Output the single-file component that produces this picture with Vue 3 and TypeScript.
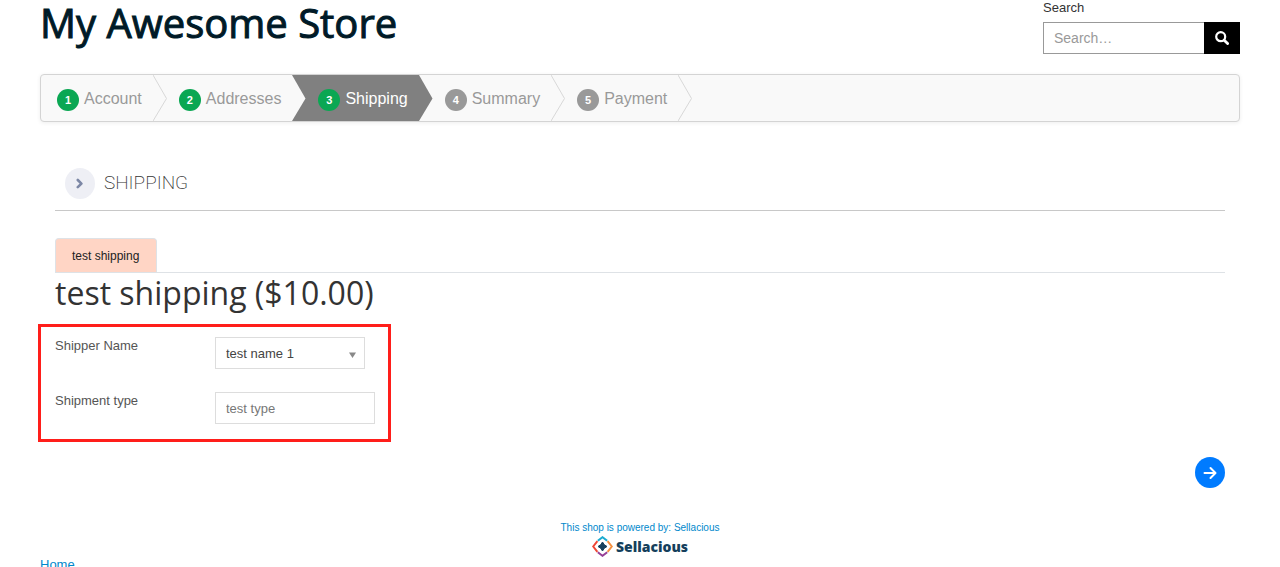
<script setup lang="ts">
import { ref } from 'vue'

interface Step {
  label: string
  state: 'done' | 'active' | 'todo'
}

const steps: Step[] = [
  { label: 'Account', state: 'done' },
  { label: 'Addresses', state: 'done' },
  { label: 'Shipping', state: 'active' },
  { label: 'Summary', state: 'todo' },
  { label: 'Payment', state: 'todo' },
]

const query = ref('')
const shipper = ref('test name 1')
const shipmentType = ref('')

function arrowClass(index: number): string {
  if (steps[index].state === 'active') return 'arrow leaving'
  if (steps[index + 1]?.state === 'active') return 'arrow entering'
  return 'arrow'
}
</script>

<template>
  <div class="page">
    <header class="header">
      <h1 class="brand">My Awesome Store</h1>
      <form class="search" role="search" @submit.prevent>
        <label for="search-box">Search</label>
        <div class="search-row">
          <input id="search-box" v-model="query" type="text" placeholder="Search…" />
          <button type="submit" aria-label="Submit search">
            <svg width="14" height="14" viewBox="0 0 14 14">
              <circle cx="5.7" cy="5.7" r="4.5" fill="none" stroke="#fff" stroke-width="2.2" />
              <path d="M9.2 9.2l3.4 3.4" stroke="#fff" stroke-width="2.8" stroke-linecap="round" />
            </svg>
          </button>
        </div>
      </form>
    </header>

    <ol class="steps">
      <li v-for="(step, i) in steps" :key="step.label" :class="['step', step.state]">
        <span class="step-body">
          <span class="badge">{{ i + 1 }}</span>
          <span class="step-label">{{ step.label }}</span>
        </span>
        <svg :class="arrowClass(i)" width="14" height="46" viewBox="0 0 14 46" preserveAspectRatio="none">
          <path class="arrow-fill" d="M0 0L13.5 23.5L0 46Z" />
          <path class="arrow-line" d="M0 0L13.5 23.5L0 46" />
        </svg>
      </li>
    </ol>

    <main class="content">
      <div class="section-head">
        <span class="section-icon">
          <svg width="8" height="12" viewBox="0 0 8 12">
            <path d="M1.8 2l3.6 3.6l-3.6 3.6" fill="none" stroke="#7c87a5" stroke-width="2.6" stroke-linecap="round" stroke-linejoin="round" />
          </svg>
        </span>
        <h2>SHIPPING</h2>
      </div>

      <div class="tabs" role="tablist">
        <button class="tab" type="button" role="tab" aria-selected="true">test shipping</button>
      </div>

      <h3 class="method">test shipping ($10.00)</h3>

      <form class="fields" @submit.prevent>
        <div class="field">
          <label for="shipper">Shipper Name</label>
          <div class="select-wrap">
            <select id="shipper" v-model="shipper">
              <option>test name 1</option>
            </select>
            <svg class="caret" width="7" height="6" viewBox="0 0 7 6">
              <path d="M0 0.5H7L3.5 6Z" fill="#888" />
            </svg>
          </div>
        </div>
        <div class="field">
          <label for="shipment-type">Shipment type</label>
          <input id="shipment-type" v-model="shipmentType" type="text" placeholder="test type" />
        </div>
      </form>

      <div class="actions">
        <button class="next" type="button" aria-label="Next">
          <svg width="14" height="14" viewBox="0 0 14 14">
            <path d="M1.5 7H12M7.5 2l5 5l-5 5" fill="none" stroke="#fff" stroke-width="2" stroke-linecap="round" stroke-linejoin="round" />
          </svg>
        </button>
      </div>
    </main>

    <footer class="footer">
      <a class="powered" href="#">This shop is powered by: Sellacious</a>
      <a class="logo" href="#">
        <svg width="21" height="21" viewBox="0 0 21 21" fill="none" stroke-width="2">
          <path d="M5.8 4.7L10.5 1.2L15.2 4.7" stroke="#1cabd0" />
          <path d="M5.4 5.2L1.2 10.5L5.4 15.8" stroke="#ee4636" />
          <path d="M15.6 5.2L19.8 10.5L15.6 15.8" stroke="#f5903f" />
          <path d="M5.8 16.3L10.5 19.8L15.2 16.3" stroke="#963f96" />
          <path d="M10.5 6L12.3 8.7L15 10.5L12.3 12.3L10.5 15L8.7 12.3L6 10.5L8.7 8.7Z" fill="#153f5c" stroke="#153f5c" stroke-width="1" />
        </svg>
        <span>Sellacious</span>
      </a>
      <nav class="crumbs"><a href="#">Home</a></nav>
    </footer>
  </div>
</template>

<style>
html {
  overflow-x: hidden;
}
body {
  margin: 0;
  background: #fff;
}
</style>

<style scoped>
.page {
  max-width: 1200px;
  margin: 0 auto;
  padding: 0 40px;
  font-family: "Liberation Sans", Arial, sans-serif;
  font-size: 13px;
  line-height: 16px;
  color: #333;
}
button,
input,
select {
  font-family: inherit;
  box-sizing: border-box;
  margin: 0;
  border-radius: 0;
}
input::placeholder {
  color: #999;
  opacity: 1;
}
a {
  color: #0088cc;
  text-decoration: none;
}
.header {
  display: flex;
  justify-content: space-between;
  align-items: flex-start;
}
.brand {
  margin: 0;
  font: 400 40px/46px "Open Sans", sans-serif;
  color: #001a27;
  -webkit-text-stroke: 1px #001a27;
}
.search {
  width: 197px;
}
.search label {
  display: block;
  padding-bottom: 6px;
}
.search-row {
  display: flex;
  height: 32px;
}
.search-row input {
  flex: 1;
  min-width: 0;
  padding: 0 10px;
  border: 1px solid #999;
  border-right: 0;
  font-size: 14px;
}
.search-row button {
  width: 36px;
  padding: 0;
  border: 0;
  background: #000;
}
.search-row svg {
  display: block;
  margin: 0 auto;
}
.steps {
  display: flex;
  margin: 20px 0 0;
  padding: 0;
  list-style: none;
  background: #f9f9f9;
  border: 1px solid #d4d4d4;
  border-radius: 4px;
  box-shadow: 0 1px 4px rgba(0, 0, 0, 0.07);
}
.step {
  display: flex;
  color: #999;
}
.step-body {
  display: flex;
  align-items: center;
  gap: 5px;
  padding: 3px 11px 0 12px;
}
.step:first-child .step-body {
  padding-left: 16px;
}
.badge {
  width: 22px;
  height: 22px;
  border-radius: 50%;
  background: #999;
  color: #fff;
  font-size: 11px;
  font-weight: 700;
  line-height: 22px;
  text-align: center;
}
.step-label {
  font-size: 16px;
  line-height: 20px;
  padding-bottom: 2px;
}
.done .badge,
.active .badge {
  background: #0aa753;
}
.active .step-body {
  background: #808080;
  color: #fff;
}
.arrow {
  display: block;
}
.arrow-fill {
  fill: #f9f9f9;
}
.arrow-line {
  fill: none;
  stroke: #d8d8d8;
}
.entering {
  background: #808080;
}
.entering .arrow-line,
.leaving .arrow-line {
  stroke: none;
}
.leaving .arrow-fill {
  fill: #808080;
}
.content {
  padding: 46px 15px 0;
}
.section-head {
  display: flex;
  align-items: center;
  gap: 9px;
  padding: 0 10px 11px;
  border-bottom: 1px solid #c8c8c8;
}
.section-icon {
  display: flex;
  align-items: center;
  justify-content: center;
  width: 30px;
  height: 31px;
  border-radius: 50%;
  background: #eeeff5;
}
.section-head h2 {
  margin: 0;
  padding-bottom: 2px;
  font: 200 19px/24px Roboto, sans-serif;
  color: #333;
}
.tabs {
  display: flex;
  margin-top: 27px;
  border-bottom: 1px solid #dee2e6;
}
.tab {
  height: 34px;
  padding: 0 17px 0 16px;
  border: 1px solid #dee2e6;
  border-bottom: 0;
  border-radius: 4px 4px 0 0;
  background: #ffd5c5;
  font-size: 12px;
  color: #222;
}
.method {
  margin: 0;
  font: 400 32px/40px "Open Sans", sans-serif;
  color: #333;
}
.fields {
  display: flex;
  flex-direction: column;
  gap: 23px;
  box-sizing: border-box;
  width: 353px;
  margin: 11px 0 0 -17px;
  padding: 10px 13px 15px 14px;
  border: 3px solid #ff1e1a;
}
.field {
  display: flex;
  align-items: flex-start;
}
.field label {
  width: 160px;
  padding-top: 1px;
  color: #555;
}
.field input {
  width: 160px;
  height: 32px;
  padding: 0 10px;
  border: 1px solid #ddd;
  font-size: 13px;
}
.field input::placeholder {
  color: #777;
}
.select-wrap {
  position: relative;
}
.field select {
  width: 150px;
  height: 32px;
  padding: 0 10px;
  border: 1px solid #ddd;
  background: #fff;
  font-size: 13px;
  color: #444;
  appearance: none;
}
.caret {
  position: absolute;
  right: 9px;
  top: 15px;
  pointer-events: none;
}
.actions {
  display: flex;
  justify-content: flex-end;
  margin-top: 15px;
}
.next {
  display: flex;
  align-items: center;
  justify-content: center;
  width: 30px;
  height: 31px;
  padding: 0;
  border: 0;
  border-radius: 50%;
  background: #007bff;
}
.footer {
  display: flex;
  flex-direction: column;
  align-items: center;
  margin-top: 34px;
}
.powered {
  font-size: 10px;
  line-height: 12px;
}
.logo {
  display: flex;
  align-items: center;
  gap: 3px;
  margin-top: 2px;
  font: 800 14px/20px "Open Sans", sans-serif;
  color: #153f5c;
}
.crumbs {
  align-self: stretch;
}
</style>
